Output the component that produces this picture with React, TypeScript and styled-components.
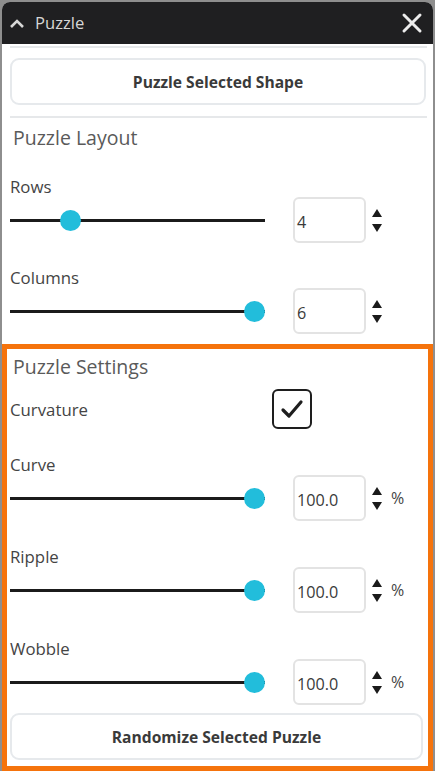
import React from "react";
import styled, { createGlobalStyle } from "styled-components";

const Global = createGlobalStyle`
  html, body { margin: 0; padding: 0; }
  body {
    background: #8e8e8e;
    font-family: "Open Sans", "Noto Sans", sans-serif;
    width: 435px;
    height: 771px;
    overflow: hidden;
  }
  #root { padding: 2px 2px 0 2px; }
`;

const Window = styled.div`
  width: 431px;
  height: 769px;
  background: #fff;
  border-radius: 8px 8px 0 0;
  overflow: hidden;
  display: flex;
  flex-direction: column;
`;

const TitleBar = styled.div`
  height: 42px;
  flex: none;
  background: #1f1f21;
  display: flex;
  align-items: center;
  padding: 0 10px 0 7px;
  gap: 10px;
`;

const Title = styled.span`
  flex: 1;
  color: #d6d6d6;
  font-size: 16.6px;
  line-height: 20px;
`;

const Body = styled.div`
  padding: 0 7px 0 8px;
  display: flex;
  flex-direction: column;
`;

const Rule = styled.div<{ $top: number }>`
  height: 2px;
  background: #e6e8ea;
  margin-top: ${(p) => p.$top}px;
  margin-right: -1px;
`;

const Button = styled.button<{ $top: number }>`
  margin-top: ${(p) => p.$top}px;
  height: 47px;
  width: 100%;
  flex: none;
  background: #fff;
  border: 2px solid #e6e9ec;
  border-radius: 9px;
  font-family: inherit;
  font-size: 15.6px;
  font-weight: 700;
  color: #3a3a3a;
  cursor: pointer;
`;

const Heading = styled.div<{ $top: number }>`
  margin-top: ${(p) => p.$top}px;
  padding-left: 3px;
  font-size: 19.5px;
  line-height: 24px;
  color: #5a5a5a;
`;

const Field = styled.div<{ $top: number }>`
  margin-top: ${(p) => p.$top}px;
  display: flex;
  flex-direction: column;
  gap: 2px;
`;

const Label = styled.div`
  font-size: 16.8px;
  line-height: 20px;
  color: #444;
`;

const Row = styled.div`
  height: 42px;
  display: flex;
  align-items: center;
`;

const Track = styled.div`
  position: relative;
  width: 255px;
  height: 3px;
  background: #1b1b1b;
  flex: none;
`;

const Thumb = styled.div`
  position: absolute;
  top: -9px;
  width: 21px;
  height: 21px;
  border-radius: 50%;
  background: #22bddb;
`;

const NumberBox = styled.div`
  margin-left: 28px;
  width: 67px;
  height: 38px;
  border: 2px solid #e3e3e3;
  border-radius: 6px;
  display: flex;
  align-items: center;
  padding-left: 2px;
  padding-top: 4px;
  box-sizing: content-box;
  font-size: 16.2px;
  color: #3a3a3a;
`;

const Spinner = styled.div`
  margin-left: 5px;
  width: 12px;
  display: flex;
  flex-direction: column;
  align-items: center;
  gap: 7px;
`;

const Unit = styled.span`
  margin-left: 8px;
  font-size: 16px;
  color: #444;
`;

const Settings = styled.div`
  flex: 1;
  margin-top: 12px;
  border: 5px solid #f5730c;
  padding: 0 5px 0 3px;
  display: flex;
  flex-direction: column;
`;

const CheckRow = styled.div`
  margin-top: 10px;
  height: 40px;
  display: flex;
  align-items: center;
`;

const CheckLabel = styled(Label)`
  width: 262px;
  padding-top: 2px;
`;

const Check = styled.div`
  width: 36px;
  height: 36px;
  border: 2.5px solid #1e1e1e;
  border-radius: 6px;
  display: flex;
  align-items: center;
  justify-content: center;
`;

const Arrow = ({ down }: { down?: boolean }) => (
  <svg width="10" height="8" viewBox="0 0 10 8">
    <polygon points={down ? "0,0 10,0 5,8" : "5,0 10,8 0,8"} fill="#1a1a1a" />
  </svg>
);

const Slider = ({
  label,
  value,
  fraction,
  unit,
  top,
}: {
  label: string;
  value: string;
  fraction: number;
  unit?: string;
  top: number;
}) => (
  <Field $top={top}>
    <Label>{label}</Label>
    <Row>
      <Track>
        <Thumb style={{ left: `${fraction * 234}px` }} />
      </Track>
      <NumberBox>{value}</NumberBox>
      <Spinner>
        <Arrow />
        <Arrow down />
      </Spinner>
      {unit && <Unit>{unit}</Unit>}
    </Row>
  </Field>
);

export default function App() {
  return (
    <>
      <Global />
      <Window>
        <TitleBar>
          <svg width="16" height="12" viewBox="0 0 16 12">
            <polyline
              points="2,10 8,4 14,10"
              fill="none"
              stroke="#d6d6d6"
              strokeWidth="2.6"
            />
          </svg>
          <Title>Puzzle</Title>
          <svg width="22" height="22" viewBox="0 0 22 22">
            <path
              d="M3 3 L19 19 M19 3 L3 19"
              stroke="#ececec"
              strokeWidth="3"
              strokeLinecap="round"
            />
          </svg>
        </TitleBar>
        <Body>
          <Rule $top={2} />
          <Button $top={10}>Puzzle Selected Shape</Button>
          <Rule $top={11} />
          <Heading $top={8}>Puzzle Layout</Heading>
          <Slider top={27} label="Rows" value="4" fraction={0.213} />
          <Slider top={27} label="Columns" value="6" fraction={1} />
        </Body>
        <Settings>
          <Heading $top={6}>Puzzle Settings</Heading>
          <CheckRow>
            <CheckLabel>Curvature</CheckLabel>
            <Check>
              <svg width="24" height="22" viewBox="0 0 24 22">
                <polyline
                  points="3,12 9,18 21,4"
                  fill="none"
                  stroke="#1e1e1e"
                  strokeWidth="3.2"
                  strokeLinecap="round"
                  strokeLinejoin="round"
                />
              </svg>
            </Check>
          </CheckRow>
          <Slider top={26} label="Curve" value="100.0" fraction={1} unit="%" />
          <Slider top={28} label="Ripple" value="100.0" fraction={1} unit="%" />
          <Slider top={28} label="Wobble" value="100.0" fraction={1} unit="%" />
          <Button $top={10}>Randomize Selected Puzzle</Button>
        </Settings>
      </Window>
    </>
  );
}
